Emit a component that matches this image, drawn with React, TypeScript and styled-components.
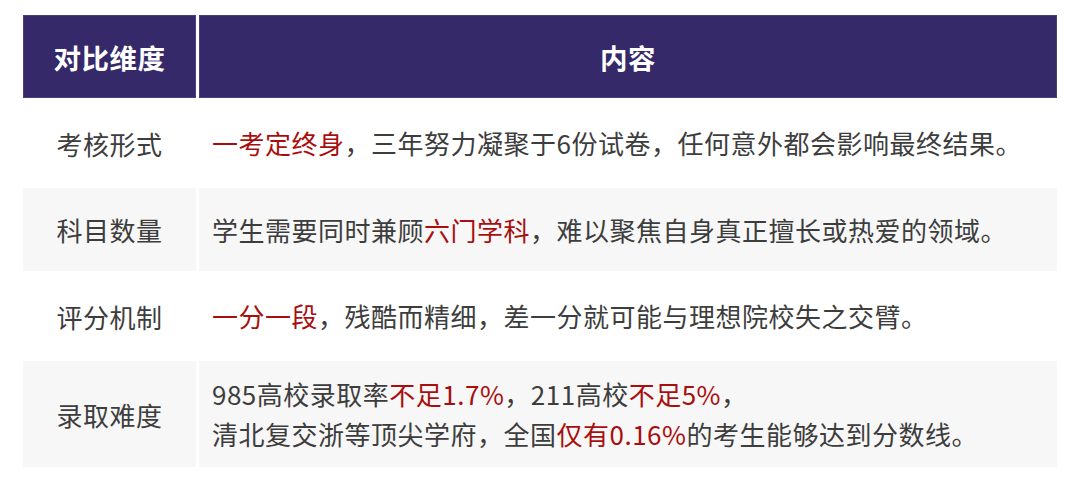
import React from "react";
import styled, { createGlobalStyle } from "styled-components";

const Global = createGlobalStyle`
  html, body { margin: 0; padding: 0; background: #ffffff; }
  body { font-family: "Noto Sans CJK SC", "Noto Sans", sans-serif; }
`;

const Page = styled.div`
  padding: 15px 0 0 23px;
`;

const Grid = styled.div`
  display: grid;
  grid-template-columns: 173px 858px;
  grid-template-rows: 83px 84px 83px 84px 106px;
  column-gap: 3px;
  row-gap: 3px;
`;

const HeadCell = styled.div`
  background: #35296a;
  box-shadow: inset 0 0 0 1px #4a3f7e;
  color: #ffffff;
  font-weight: 700;
  font-size: 27.5px;
  letter-spacing: 0.5px;
  display: flex;
  align-items: center;
  justify-content: center;
`;

const LabelCell = styled.div<{ $shade: boolean }>`
  background: ${(p) => (p.$shade ? "#f7f7f7" : "#ffffff")};
  color: #3d3d3d;
  font-size: 26px;
  letter-spacing: 0.5px;
  display: flex;
  align-items: center;
  justify-content: center;
`;

const TextCell = styled.div<{ $shade: boolean }>`
  background: ${(p) => (p.$shade ? "#f7f7f7" : "#ffffff")};
  color: #3d3d3d;
  font-size: 26px;
  letter-spacing: 0.5px;
  line-height: 40px;
  display: flex;
  align-items: center;
  padding-left: 13px;
`;

const Mark = styled.span`
  color: #a90e0e;
`;

const rows: { label: string; body: React.ReactNode }[] = [
  {
    label: "考核形式",
    body: (
      <span>
        <Mark>一考定终身</Mark>，三年努力凝聚于6份试卷，任何意外都会影响最终结果。
      </span>
    ),
  },
  {
    label: "科目数量",
    body: (
      <span>
        学生需要同时兼顾<Mark>六门学科</Mark>，难以聚焦自身真正擅长或热爱的领域。
      </span>
    ),
  },
  {
    label: "评分机制",
    body: (
      <span>
        <Mark>一分一段</Mark>，残酷而精细，差一分就可能与理想院校失之交臂。
      </span>
    ),
  },
  {
    label: "录取难度",
    body: (
      <span>
        985高校录取率<Mark>不足1.7%</Mark>，211高校<Mark>不足5%</Mark>，
        <br />
        清北复交浙等顶尖学府，全国<Mark>仅有0.16%</Mark>的考生能够达到分数线。
      </span>
    ),
  },
];

export default function App() {
  return (
    <>
      <Global />
      <Page>
        <Grid>
          <HeadCell>对比维度</HeadCell>
          <HeadCell>内容</HeadCell>
          {rows.map((r, i) => (
            <React.Fragment key={r.label}>
              <LabelCell $shade={i % 2 === 1}>{r.label}</LabelCell>
              <TextCell $shade={i % 2 === 1}>{r.body}</TextCell>
            </React.Fragment>
          ))}
        </Grid>
      </Page>
    </>
  );
}
